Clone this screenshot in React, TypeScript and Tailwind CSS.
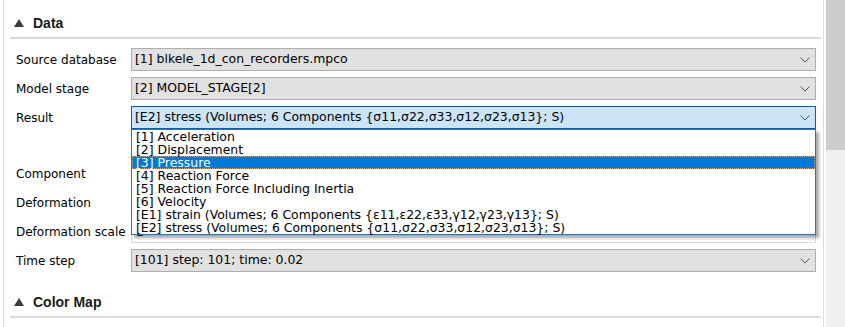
const font = { fontFamily: '"DejaVu Sans", Verdana, sans-serif' };
const headFont = { fontFamily: '"Liberation Sans", Arial, sans-serif' };

const resultItems = [
  "[1] Acceleration",
  "[2] Displacement",
  "[3] Pressure",
  "[4] Reaction Force",
  "[5] Reaction Force Including Inertia",
  "[6] Velocity",
  "[E1] strain (Volumes; 6 Components {ε11,ε22,ε33,γ12,γ23,γ13}; S)",
  "[E2] stress (Volumes; 6 Components {σ11,σ22,σ33,σ12,σ23,σ13}; S)",
];

function Chevron() {
  return (
    <svg width="10" height="6" viewBox="0 0 10 6" className="shrink-0">
      <path d="M0.5 0.5 L5 5 L9.5 0.5" fill="none" stroke="#555" strokeWidth="1" />
    </svg>
  );
}

function Combo({ value, active }: { value: string; active?: boolean }) {
  return (
    <div
      className={
        active
          ? "flex h-[23px] w-[685px] items-center justify-between border border-[#0a5ea8] bg-[#cce4f7] pl-[3px] pr-[5px]"
          : "flex h-[23px] w-[685px] items-center justify-between border border-[#adadad] bg-[#e1e1e1] pl-[3px] pr-[5px]"
      }
    >
      <span className="whitespace-nowrap text-[12.45px] text-black">{value}</span>
      <Chevron />
    </div>
  );
}

function Row({ label, children }: { label: string; children?: React.ReactNode }) {
  return (
    <div className="flex h-[23px] items-center">
      <div className="w-[115px] whitespace-nowrap text-[12px] text-black">{label}</div>
      {children}
    </div>
  );
}

function SectionHeader({ title }: { title: string }) {
  return (
    <div className="flex h-[37px] items-center pt-[9px]" style={headFont}>
      <svg width="10" height="8" viewBox="0 0 10 8" className="ml-[4px]">
        <path d="M0 8 L5 0 L10 8 Z" fill="#3c3c3c" />
      </svg>
      <span className="ml-[9px] text-[14px] font-bold text-[#1a1a1a]">{title}</span>
    </div>
  );
}

export default function App() {
  return (
    <div className="flex h-[327px] w-[845px] overflow-hidden bg-white" style={font}>
      <div className="relative w-[823px] pl-[3px]">
        <div className="h-full border-l border-[#dcdcdc] pl-[6px] pr-[2px]">
          <SectionHeader title="Data" />
          <div className="h-[2px] bg-[#dadada]" />

          <div className="flex flex-col pl-[6px] pt-[9px]">
            <div className="flex flex-col gap-[6px]">
              <Row label="Source database">
                <Combo value="[1] blkele_1d_con_recorders.mpco" />
              </Row>
              <Row label="Model stage">
                <Combo value="[2] MODEL_STAGE[2]" />
              </Row>
              <Row label="Result">
                <Combo value="[E2] stress (Volumes; 6 Components {σ11,σ22,σ33,σ12,σ23,σ13}; S)" active />
              </Row>
            </div>
            <div className="mt-[33px] flex flex-col gap-[6px]">
              <Row label="Component">
                <Combo value="" />
              </Row>
              <Row label="Deformation">
                <Combo value="" />
              </Row>
              <Row label="Deformation scale">
                <div className="flex h-[23px] w-[685px] items-center border border-[#d9d9d9] bg-white pl-[4px] text-[12px]">
                  1
                </div>
              </Row>
              <Row label="Time step">
                <Combo value="[101] step: 101; time: 0.02" />
              </Row>
            </div>
          </div>

          <div className="h-[44px] pt-[7px]">
            <SectionHeader title="Color Map" />
          </div>
          <div className="h-[2px] bg-[#dadada]" />
        </div>

        {/* open result list */}
        <div className="absolute left-[131px] top-[129px] w-[685px] border border-[#1c77c8] bg-white shadow-[3px_3px_3px_rgba(0,0,0,0.35)]">
          {resultItems.map((item, i) => (
            <div
              key={item}
              className={
                i === 2
                  ? "h-[13px] whitespace-nowrap border border-dotted border-[#f0a050] bg-[#0078d7] pl-[3px] text-[12.45px] leading-[11px] text-white"
                  : "h-[13px] whitespace-nowrap pl-[4px] text-[12.45px] leading-[13px] text-black"
              }
            >
              {item}
            </div>
          ))}
        </div>
      </div>

      <div className="flex w-[22px] border-l border-[#dcdcdc] bg-white pl-[2px]">
        <div className="flex-1 bg-[#f0f0f0]">
          <div className="h-[150px] bg-[#cdcdcd]" />
        </div>
      </div>
    </div>
  );
}
